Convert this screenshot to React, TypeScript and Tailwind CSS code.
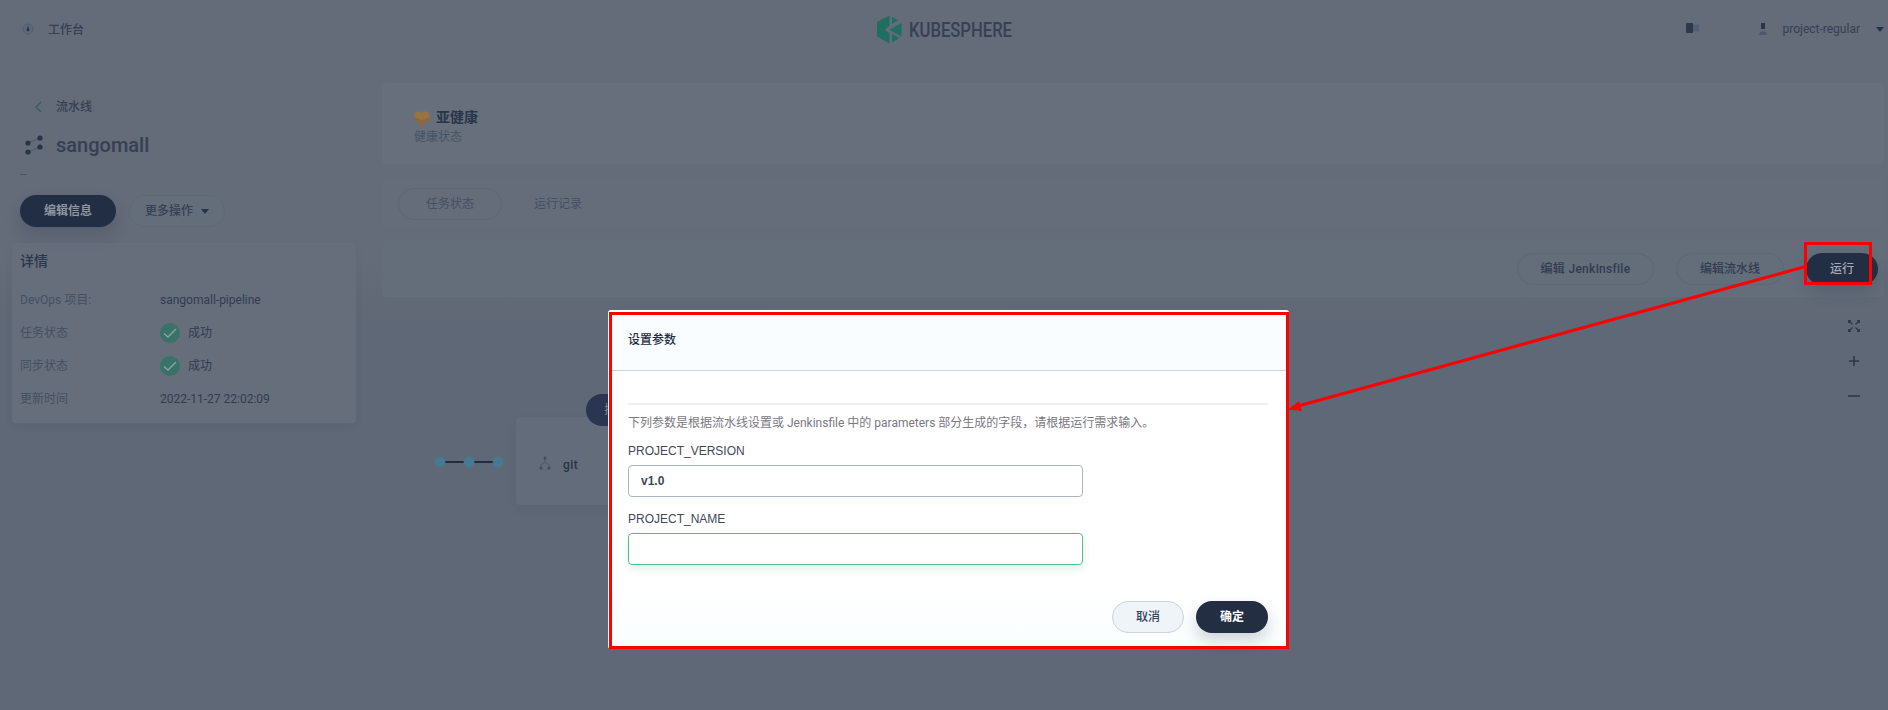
import React from "react";

const cjk = "font-['Roboto','Noto_Sans_CJK_SC',sans-serif]";

function Caret() {
  return (
    <svg width="8" height="5" viewBox="0 0 8 5"><path d="M0 0h8L4 5z" fill="#273448" /></svg>
  );
}

function Logo() {
  return (
    <svg className="overflow-visible" width="150" height="30" viewBox="0 0 150 30">
      <g fill="#1f6e5f">
        <path d="M12.500 0.500V11L7.500 14.500L12.500 18.500V28.500L0 21.500V7z" />
        <path d="M15 2L21 5L15 9z" />
        <path d="M24.500 8V21.500L12.500 14.800z" />
        <path d="M15 19L22.500 23L15 27.500z" />
      </g>
      <text x="32" y="22" fontFamily="Roboto, sans-serif" fontSize="19.500" fontWeight="500" fill="#364154" textLength="103" lengthAdjust="spacingAndGlyphs">KUBESPHERE</text>
    </svg>
  );
}

function Header() {
  return (
    <header className="flex h-[83px] items-start pt-[15px] text-[12px] leading-[30px] text-[#344053]">
      <div className="flex w-[876px] items-center pl-[22px]">
        <svg className="-mt-[2px]" width="12" height="12" viewBox="0 0 12 12">
          <circle cx="6" cy="6" r="5" fill="#56647a" fillOpacity=".5" stroke="#536071" />
          <path d="M6 2.500L7.500 7.500L6 8.500L4.500 7.500z" fill="#273448" />
        </svg>
        <span className="ml-[14px] font-medium">工作台</span>
      </div>
      <div className="flex h-[30px] w-[200px] items-start pl-[1px]"><Logo /></div>
      <div className="-mt-[1px] flex flex-1 items-center justify-end pr-1">
        <svg className="-mt-[2px]" width="14" height="10" viewBox="0 0 14 10">
          <path d="M0 0h7v10H0z" fill="#2d394b" /><path d="M7 1.500h6v7H7z" fill="#546071" />
        </svg>
        <svg className="ml-[58px]" width="10" height="13" viewBox="0 0 10 13">
          <path d="M3 0h4v6H3z" fill="#2a3648" /><path d="M1 12L2.500 8.500h5L9 12z" fill="#4d596a" />
        </svg>
        <span className="mr-4 ml-[15px] leading-[30px]">project-regular</span>
        <Caret />
      </div>
    </header>
  );
}

function Success() {
  return (
    <div className="flex items-center gap-2">
      <svg width="20" height="20" viewBox="0 0 20 20">
        <circle cx="10" cy="10" r="10" fill="#387268" />
        <path d="M4 10.500L8 14L16 6" fill="none" stroke="#8aa39f" strokeWidth="1.400" />
      </svg>
      <span>成功</span>
    </div>
  );
}

function Row({ label, top, children }: { label: string; top: string; children: React.ReactNode }) {
  return (
    <div className={`flex items-center text-[12px] leading-[20px] ${top}`}>
      <div className="w-[140px] pt-[1px] text-[#435062]">{label}</div>
      <div className="text-[#303c50]">{children}</div>
    </div>
  );
}

function Sidebar() {
  return (
    <aside className="w-[380px] shrink-0 text-[#344053]">
      <div className="flex h-[46px] items-center pt-[2px] pl-[35px] text-[12px] font-medium">
        <svg width="7" height="12" viewBox="0 0 7 12"><path d="M6 1L1 6L6 11" fill="none" stroke="#3b5c61" strokeWidth="1.500" /></svg>
        <span className="ml-[14px]">流水线</span>
      </div>
      <div className="flex h-[32px] items-center pl-[25px]">
        <svg width="18" height="20" viewBox="0 0 18 20">
          <path d="M3 8L15 3M3 17L15 12" stroke="#566172" strokeWidth="1.500" />
          <g fill="#283447"><circle cx="3" cy="8" r="2.600" /><circle cx="15" cy="3" r="2.600" /><circle cx="3" cy="17" r="2.600" /><circle cx="15" cy="12" r="2.600" /></g>
        </svg>
        <h1 className="ml-[13px] text-[20px] leading-[32px] font-medium">sangomall</h1>
      </div>
      <div className="flex h-[34px] items-center pb-[8px] pl-5 text-[12px] text-[#475365]">--</div>
      <div className="flex pl-5 text-[12px] font-medium">
        <button className="h-[32px] w-[96px] rounded-full bg-[#222e43] font-bold text-[#8e96a1] shadow-[0_8px_16px_0_rgba(36,46,66,0.2)]">编辑信息</button>
        <button className="ml-[13px] flex h-[32px] w-[96px] items-center justify-center gap-2 rounded-full border border-[#5e6979] bg-[#646e7b]">更多操作<Caret /></button>
      </div>
      <section className="mt-[16px] ml-[12px] h-[180px] w-[344px] rounded bg-[#666e7c] pt-[8px] pl-2 shadow-[0_4px_8px_0_rgba(36,46,66,0.06)]">
        <h2 className="text-[14px] leading-[20px] font-medium text-[#2b374a]">详情</h2>
        <Row label="DevOps 项目:" top="mt-[18px]">sangomall-pipeline</Row>
        <Row label="任务状态" top="mt-[12px]"><Success /></Row>
        <Row label="同步状态" top="mt-[12px]"><Success /></Row>
        <Row label="更新时间" top="mt-[12px]">2022-11-27 22:02:09</Row>
      </section>
    </aside>
  );
}

function Canvas() {
  return (
    <div className="relative mt-[3px] h-[410px] overflow-hidden">
      <svg className="absolute top-[156px] left-[52px]" width="70" height="12" viewBox="0 0 70 12">
        <path d="M6 6h58" stroke="#202c42" strokeWidth="2" />
        <g fill="#467a90"><circle cx="6" cy="6" r="5.400" /><circle cx="35" cy="6" r="5.400" /><circle cx="64" cy="6" r="5.400" /></g>
      </svg>
      <div className="absolute top-[117px] left-[134px] flex h-[88px] w-[300px] items-center rounded bg-[#636c7a] pl-[23px] shadow-[0_4px_8px_0_rgba(36,46,66,0.08)]">
        <svg className="mt-1" width="12" height="14" viewBox="0 0 12 14">
          <path d="M6 2v4M6 6L2 9v3M6 6l4 3v3" fill="none" stroke="#525e6f" strokeWidth="1.200" />
          <g fill="#414d60"><circle cx="6" cy="2" r="1.500" /><circle cx="2" cy="12" r="1.500" /><circle cx="10" cy="12" r="1.500" /></g>
        </svg>
        <span className="mt-[7px] ml-[12px] text-[12px] font-medium tracking-[0.4px] text-[#273347]">git</span>
      </div>
      <div className="absolute top-[94px] left-[204px] flex h-[32px] w-[96px] items-center rounded-full bg-[#2a3650] pl-[18px] text-[12px] text-[#7f8896]">拉取代码</div>
      <div className="absolute top-[20px] right-[28px] flex flex-col items-center gap-[23px]">
        <svg width="12" height="12" viewBox="0 0 12 12" fill="none" stroke="#2b374a" strokeWidth="1.200">
          <path d="M4.500 4.500L1 1M7.500 4.500L11 1M4.500 7.500L1 11M7.500 7.500L11 11M0.700 3V0.700H3M9 0.700h2.300V3M0.700 9v2.300H3M9 11.300h2.300V9" />
        </svg>
        <svg width="12" height="12" viewBox="0 0 12 12"><path d="M6 1v10M1 6h10" stroke="#2b374a" strokeWidth="1.600" /></svg>
        <svg width="12" height="12" viewBox="0 0 12 12"><path d="M0 6h12" stroke="#2e3a4d" strokeWidth="1.600" /></svg>
      </div>
    </div>
  );
}

function Main() {
  return (
    <main className="flex min-w-0 flex-1 flex-col pl-[2px]">
      <section className="mr-1 h-[81px] rounded bg-[#666f7b] pt-[24px] pl-[32px]">
        <div className="flex items-center gap-[6px] leading-[20px]">
          <svg className="mt-[2px]" width="16" height="15" viewBox="0 0 16 15">
            <path d="M8 15L1.500 9.500C-1 6.500 0 1 4 0.500C6 0.300 7.300 1 8 2C8.700 1 10 0.300 12 0.500C16 1 17 6.500 14.500 9.500L8 15Z" fill="#977443" />
            <path d="M8 15L1.500 9.500C0.600 8.500 0.200 7.300 0.200 6L8 9L15.800 6C15.800 7.300 15.400 8.500 14.500 9.500L8 15Z" fill="#8f6641" />
          </svg>
          <strong className="text-[14px] text-[#29354a]">亚健康</strong>
        </div>
        <div className="pt-[1px] text-[12px] leading-[18px] text-[#475365]">健康状态</div>
      </section>
      <section className="mt-[14px] mr-1 flex h-[51px] items-center rounded bg-[#656d7b] pl-4 text-[12px] text-[#435062]">
        <div className="flex h-[32px] w-[104px] items-center justify-center rounded-full border border-[#5c6777]">任务状态</div>
        <div className="ml-[32px]">运行记录</div>
      </section>
      <section className="mt-[12px] mr-1 flex h-[56px] items-center justify-end rounded bg-[#646d7a] pr-[6px] text-[12px] font-medium text-[#303c50]">
        <button className="h-[32px] w-[137px] rounded-full border border-[#5c6777] tracking-[0.3px]">编辑 Jenkinsfile</button>
        <button className="ml-[22px] h-[32px] w-[108px] rounded-full border border-[#5c6777]">编辑流水线</button>
        <button className="ml-[22px] h-[32px] w-[72px] rounded-full bg-[#222e43] text-[#a3aab4] shadow-[0_8px_16px_0_rgba(36,46,66,0.2)]">运行</button>
      </section>
      <Canvas />
    </main>
  );
}

function Dialog() {
  return (
    <div role="dialog" className="absolute top-[310px] left-[608px] h-[339px] w-[681px] rounded-[3px] bg-white pt-[2px] pl-[1px]">
      <div className="flex h-[337px] flex-col border-[3px] border-[#ff0000]">
        <div className="flex h-[56px] shrink-0 items-center border-b border-[#ccd3db] bg-[#f9fdff] pb-[5px] pl-[16px] text-[12px] font-medium text-[#242e42]">设置参数</div>
        <div className="flex flex-col pr-[18px] pl-[16px]">
          <div className="mt-[32px] h-[2px] bg-[#eceef0]" />
          <p className="mt-[8px] text-[12px] leading-[20px] text-[#79797f]">下列参数是根据流水线设置或 Jenkinsfile 中的 parameters 部分生成的字段，请根据运行需求输入。</p>
          <label className="mt-[8px] font-['Liberation_Sans',sans-serif] text-[12px] leading-[20px] text-[#404858]">PROJECT_VERSION</label>
          <input defaultValue="v1.0" className="mt-[4px] h-[32px] w-[455px] rounded-[4px] border border-[#abb4be] px-3 font-['Liberation_Sans',sans-serif] text-[12px] font-bold text-[#404858] outline-none" />
          <label className="mt-[12px] font-['Liberation_Sans',sans-serif] text-[12px] leading-[20px] text-[#404858]">PROJECT_NAME</label>
          <input className="mt-[4px] h-[32px] w-[455px] rounded-[4px] border border-[#55bc8a] px-3 text-[12px] shadow-[0_4px_8px_0_rgba(85,188,138,0.2)] outline-none" />
        </div>
        <div className="mt-[24px] flex flex-1 items-start justify-end gap-[12px] bg-linear-to-b from-white to-[#f9feff] pt-[12px] pr-[18px] text-[12px]">
          <button className="h-[32px] w-[72px] rounded-full border border-[#ccd3db] bg-[#eff4f9] font-medium text-[#36435c]">取消</button>
          <button className="h-[32px] w-[72px] rounded-full bg-[#242e42] font-bold text-white shadow-[0_8px_16px_0_rgba(36,46,66,0.2)]">确定</button>
        </div>
      </div>
    </div>
  );
}

export default function App() {
  return (
    <div className={`relative h-[710px] w-[1888px] overflow-hidden bg-[linear-gradient(#646b79_0,#646b79_260px,#5f6876_330px)] ${cjk}`}>
      <Header />
      <div className="flex">
        <Sidebar />
        <Main />
      </div>
      <Dialog />
      <svg className="pointer-events-none absolute inset-0" width="1888" height="710" viewBox="0 0 1888 710">
        <rect x="1805.500" y="243.500" width="65" height="40" fill="none" stroke="#ff0000" strokeWidth="3" />
        <path d="M1804 267L1298 406" stroke="#ff0000" strokeWidth="3" />
        <path d="M1288 409.500L1299 401L1302 411z" fill="#ff0000" />
      </svg>
    </div>
  );
}
